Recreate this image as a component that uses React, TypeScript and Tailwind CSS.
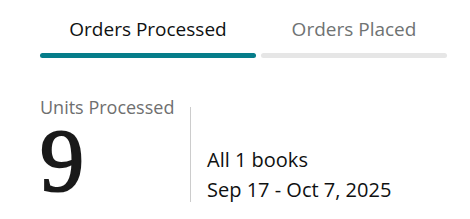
import React from 'react';

const tabs = [
  { label: 'Orders Processed', active: true, width: 'w-[216px]' },
  { label: 'Orders Placed', active: false, width: 'w-[186px]' },
];

export default function App() {
  return (
    <div
      className="w-[470px] h-[219px] bg-white pl-10 pt-4 text-[#0f1111]"
      style={{ fontFamily: '"Open Sans", "Noto Sans", Arial, sans-serif' }}
    >
      <div className="flex gap-[5px]">
        {tabs.map((tab) => (
          <div key={tab.label} className={`flex flex-col ${tab.width}`}>
            <div
              className={`text-[19px] leading-[26px] text-center ${
                tab.active ? 'text-[#0f1111]' : 'text-[#6f7373]'
              }`}
            >
              {tab.label}
            </div>
            <div
              className={`mt-[11px] h-[5px] rounded-full ${
                tab.active ? 'bg-[#067d8a]' : 'bg-[#e6e6e6]'
              }`}
            />
          </div>
        ))}
      </div>

      <div className="flex mt-[39px]">
        <div className="w-[150px] flex flex-col">
          <div className="text-[18px] leading-[20px] text-[#6f6f6f]">Units Processed</div>
          <div
            className="text-[88px] leading-none text-[#1a1a1a] [-webkit-text-stroke:2px_#1a1a1a]"
            style={{ fontFamily: '"Liberation Serif", "DejaVu Serif", serif' }}
          >
            9
          </div>
        </div>
        <div className="mt-[10px] h-[95px] w-px bg-[#cccccc]" />
        <div className="pl-4 pt-12 flex flex-col text-[20px] leading-[30px]">
          <div>All 1 books</div>
          <div>Sep 17 - Oct 7, 2025</div>
        </div>
      </div>
    </div>
  );
}
